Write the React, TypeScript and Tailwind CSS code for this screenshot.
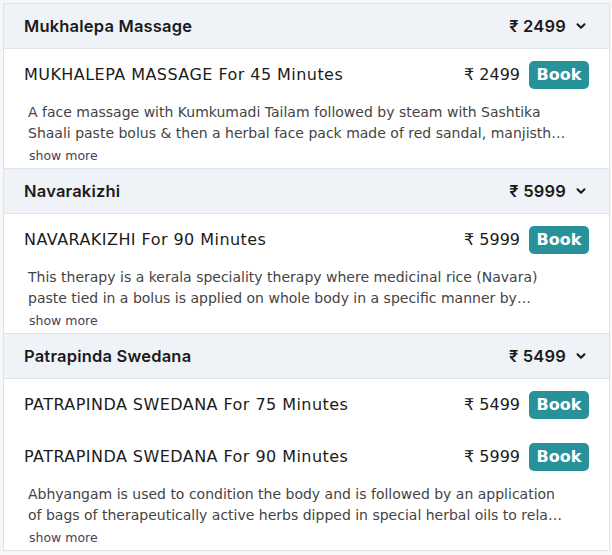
import React from 'react';
import { ChevronDown } from 'lucide-react';

type Option = { title: string; price: number };
type Therapy = { name: string; price: number; options: Option[]; desc: string };

const therapies: Therapy[] = [
  {
    name: 'Mukhalepa Massage',
    price: 2499,
    options: [{ title: 'MUKHALEPA MASSAGE For 45 Minutes', price: 2499 }],
    desc: 'A face massage with Kumkumadi Tailam followed by steam with Sashtika Shaali paste bolus & then a herbal face pack made of red sandal, manjistha and other herbs.',
  },
  {
    name: 'Navarakizhi',
    price: 5999,
    options: [{ title: 'NAVARAKIZHI For 90 Minutes', price: 5999 }],
    desc: 'This therapy is a kerala speciality therapy where medicinal rice (Navara) paste tied in a bolus is applied on whole body in a specific manner by trained therapists.',
  },
  {
    name: 'Patrapinda Swedana',
    price: 5499,
    options: [
      { title: 'PATRAPINDA SWEDANA For 75 Minutes', price: 5499 },
      { title: 'PATRAPINDA SWEDANA For 90 Minutes', price: 5999 },
    ],
    desc: 'Abhyangam is used to condition the body and is followed by an application of bags of therapeutically active herbs dipped in special herbal oils to relax the muscles.',
  },
];

function Section({ t }: { t: Therapy }) {
  return (
    <div className="border-b border-[#dfe4e8]">
      <div className="h-[45px] flex items-center justify-between pl-5 pr-[21px] bg-[#eff3f7] border-b border-[#dfe4e8] font-['Inter',sans-serif] font-semibold text-[16.5px] tracking-[0.2px] text-[#1b1b1b]">
        <span>{t.name}</span>
        <span className="flex items-center gap-[8px]">
          ₹ {t.price}
          <ChevronDown className="w-[14px] h-[14px]" strokeWidth={3.5} />
        </span>
      </div>
      <div className="pl-5 pr-5 pb-[2px] bg-white">
        {t.options.map((o) => (
          <div key={o.title} className="flex items-center justify-between py-3">
            <span className="text-[16px] tracking-[0.45px] text-[#1b1b1b]">{o.title}</span>
            <div className="flex items-center gap-[9px]">
              <span className="text-[16px] text-[#1b1b1b]">₹ {o.price}</span>
              <button className="h-[28px] w-[60px] rounded-[5px] bg-[#27929a] text-white text-[16px] font-bold">
                Book
              </button>
            </div>
          </div>
        ))}
        <p className="mt-[1px] pl-1 pr-[22px] text-[14px] leading-[21px] text-[#444] line-clamp-2">{t.desc}</p>
        <div className="mt-[2px] pl-[5px] text-[12.5px] leading-[20px] text-[#4a3d58]">show more</div>
      </div>
    </div>
  );
}

export default function App() {
  return (
    <div className="w-[612px] h-[555px] bg-[#f7f7f7] pt-[3px] pl-[3px] overflow-hidden font-['DejaVu_Sans',sans-serif]">
      <div className="w-[607px] border-t border-l border-r border-[#dfe4e8] bg-white">
        {therapies.map((t) => (
          <Section key={t.name} t={t} />
        ))}
      </div>
    </div>
  );
}
